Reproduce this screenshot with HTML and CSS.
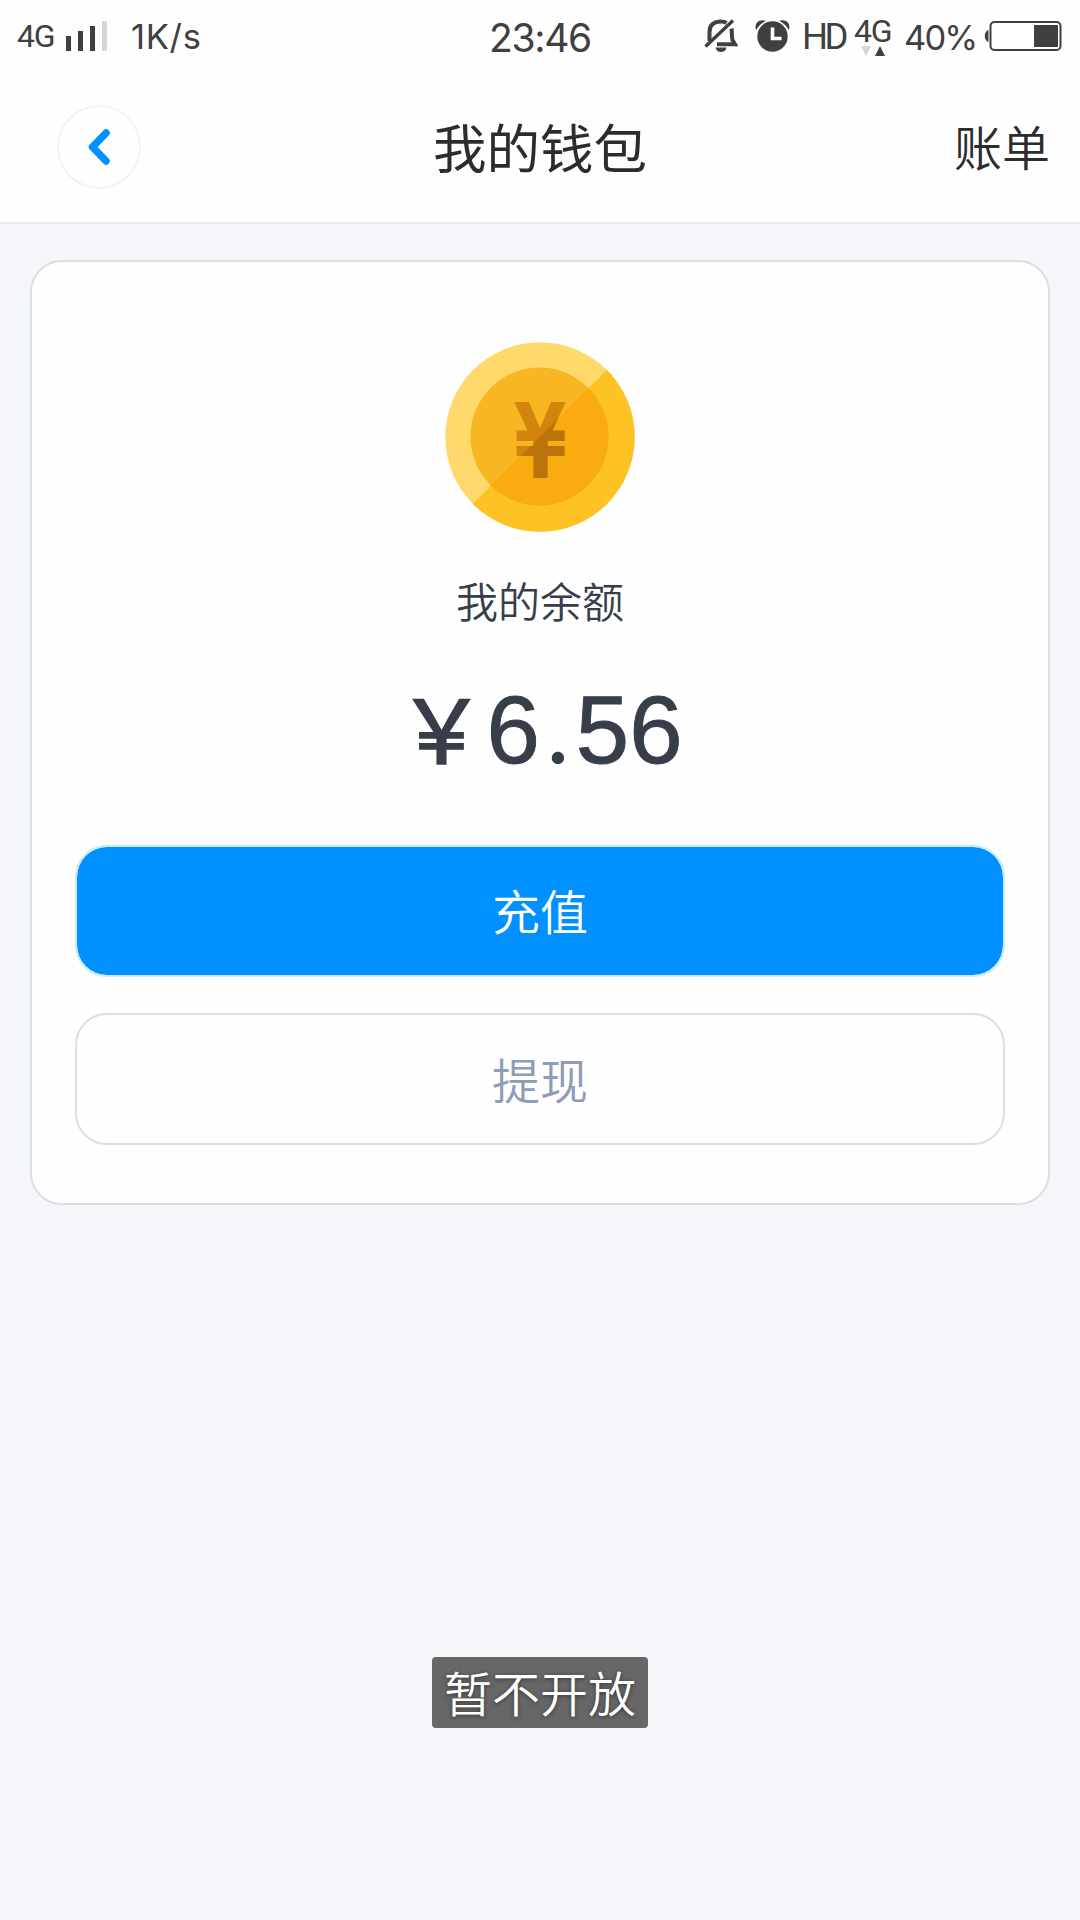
FILE: index.html
```html
<!DOCTYPE html>
<html lang="zh-CN">
<head>
<meta charset="utf-8">
<title>我的钱包</title>
<link rel="stylesheet" href="styles.css">
</head>
<body>
<div class="status">
  <div class="status-left">
    <span class="net">4G</span>
    <svg class="signal" width="42" height="30" viewBox="0 0 42 30"><path fill="#404040" d="M0 15h5v15H0zM12 10h5v20h-5zM24 5h5v25h-5z"/><path fill="#d6d6d6" d="M36 0h5v30h-5z"/></svg>
    <span class="speed">1K/s</span>
  </div>
  <time class="clock">23:46</time>
  <div class="status-right">
    <svg class="bell" width="34" height="34" viewBox="0 0 34 34"><path d="M5.500 23V14C5.500 7 10 3.500 17 3.500C19 3.500 21 4 22.500 5M27.500 10.500C28 13 27.500 18 28.500 22L31 26.300H13" fill="none" stroke="#404040" stroke-width="4"/><path d="M1.500 28.500L29 2.500" stroke="#404040" stroke-width="3.400"/><path d="M11.500 29.500h11c-1 6-10 6-11 0z" fill="#404040"/></svg>
    <svg class="alarm" width="36" height="34" viewBox="0 0 36 34"><g fill="#404040"><circle cx="17.500" cy="18.500" r="15.200"/><path d="M1 12C-1 5 4 .5 11 2.700Q4.500 6 1 12zM34 12C36 5 31 .5 24 2.700Q30.500 6 34 12z"/></g><path d="M17.500 9.500V20.500h9" fill="none" stroke="#fff" stroke-width="3.600"/></svg>
    <span class="hd">HD</span>
    <div class="mobile"><span>4G</span><svg width="24" height="10" viewBox="0 0 24 10"><path fill="#d6d6d6" d="M0 0h10L5 10z"/><path fill="#404040" d="M14 10h10L19 0z"/></svg></div>
    <span class="percent">40%</span>
    <svg class="battery" width="78" height="32" viewBox="0 0 78 32"><path d="M4.500 10C-.5 11-.5 21 4.500 22z" fill="#404040"/><rect x="6.500" y="2" width="70" height="28" rx="4" fill="#fff" stroke="#404040" stroke-width="2"/><path fill="#404040" d="M50 5h24v22H50z"/></svg>
  </div>
</div>
<header class="header">
  <button class="back" aria-label="返回"><svg width="24" height="38" viewBox="0 0 24 38"><path d="M19 5L5.500 19L19 33" fill="none" stroke="#0090ff" stroke-width="7.500" stroke-linecap="round" stroke-linejoin="round"/></svg></button>
  <h1>我的钱包</h1>
  <a class="bill">账单</a>
</header>
<main class="card">
  <svg class="coin" width="190" height="190" viewBox="0 0 190 190">
    <defs><clipPath id="lower"><path d="M190 -.5V190H-.5z"/></clipPath></defs>
    <circle cx="95" cy="95" r="94.700" fill="#ffd96b"/>
    <circle cx="95" cy="95" r="94.700" fill="#fdc224" clip-path="url(#lower)"/>
    <circle cx="94.500" cy="94.500" r="69" fill="#f8b622"/>
    <circle cx="94.500" cy="94.500" r="69" fill="#faab10" clip-path="url(#lower)"/>
    <path id="yen" fill="#d3840c" d="M69.500 60H84L95 86L106 60H120.500L107.500 88.500H119.500V99H102.500V104H119.500V114H102.500V136H88.500V114H71.500V104H88.500V99H71.500V88.500H82.500z"/>
    <use href="#yen" class="yen-shade" clip-path="url(#lower)"/>
  </svg>
  <p class="label">我的余额</p>
  <p class="amount"><span class="currency">￥</span><span>6</span><span class="dot">.</span><span>56</span></p>
  <button class="btn primary">充值</button>
  <button class="btn secondary">提现</button>
</main>
<div class="toast">暂不开放</div>
</body>
</html>
```
FILE: styles.css
```css
* { box-sizing: border-box; }
body {
  margin: 0;
  height: 1920px;
  position: relative;
  overflow: hidden;
  background: #f4f6fa;
  font-family: "Liberation Sans", "Noto Sans CJK SC", sans-serif;
  color: #2c2c2c;
}
button { font-family: inherit; padding: 0; margin: 0; }
h1, p { margin: 0; font-weight: 400; }
svg { display: block; flex: none; }

.status {
  height: 74px;
  background: #fefefe;
  display: grid;
  grid-template-columns: 1fr auto 1fr;
  color: #404040;
  line-height: 40px;
  white-space: nowrap;
  font-family: Inter, sans-serif;
}
.status-left, .status-right { display: flex; align-items: flex-start; }
.status-left { padding-left: 17px; }
.net { font-family: Roboto, sans-serif; font-size: 32px; letter-spacing: -1.2px; margin-top: 16px; width: 49px; }
.signal { margin-top: 21px; }
.speed { font-size: 34.5px; letter-spacing: 0.7px; margin: 17px 0 0 23px; }
.clock { font-size: 39px; letter-spacing: -1.3px; margin-top: 18px; }
.status-right { justify-content: flex-end; padding-right: 18px; }
.bell { margin: 18px 17px 0 0; }
.alarm { margin: 18px 11px 0 0; }
.hd { font-family: Roboto, sans-serif; font-size: 36.5px; letter-spacing: -3.5px; margin: 17px 0 0; width: 52px; }
.mobile { width: 50px; margin-top: 11px; }
.mobile span { font-family: Roboto, sans-serif; display: block; font-size: 32px; letter-spacing: -1.2px; height: 35px; }
.mobile svg { margin-left: 7px; }
.percent { font-size: 34.5px; letter-spacing: -1.9px; margin-top: 18px; width: 80px; }
.battery { margin-top: 20px; }

.header {
  height: 150px;
  background: #fefefe;
  border-bottom: 2px solid #e6e8ec;
  display: grid;
  grid-template-columns: 1fr auto 1fr;
}
.back {
  width: 84px;
  height: 84px;
  margin: 31px 0 0 57px;
  border: 2px solid #f0f3f7;
  border-radius: 50%;
  background: #fefefe;
  display: flex;
  align-items: center;
  justify-content: center;
}
.header h1 { font-size: 53.5px; line-height: 80px; margin-top: 37px; font-weight: 370; }
.bill { font-size: 48px; line-height: 72px; margin: 40px 30px 0 0; text-align: right; font-weight: 350; }

.card {
  width: 1020px;
  height: 945px;
  margin: 36px auto 0;
  padding: 80px 43px 0;
  border: 2px solid #d9dfe5;
  border-radius: 32px;
  background: #fefefe;
  display: flex;
  flex-direction: column;
  align-items: center;
}
.yen-shade { filter: brightness(0.88); }
.label { font-size: 42px; line-height: 60px; margin-top: 42px; color: #373e4a; font-weight: 350; }
.amount {
  display: flex;
  align-items: baseline;
  font-size: 96px;
  line-height: 110px;
  margin-top: 40px;
  height: 171px;
  color: #373e4a;
  -webkit-text-stroke: 1px #373e4a;
}
.currency { font-size: 88px; width: 89px; -webkit-text-stroke-width: 2px; }
.dot { font-family: Inter, sans-serif; font-size: 93px; width: 36px; text-align: center; -webkit-text-stroke-width: 0; }
.btn {
  width: 930px;
  height: 132px;
  border-radius: 32px;
  font-size: 48px;
  font-weight: 350;
  flex: none;
}
.primary { background: #0090ff; color: #fff; border: 2px solid #cdebff; background-clip: padding-box; padding-bottom: 4px; }
.secondary { background: #fefefe; color: #8f9bb8; border: 2px solid #d9dfe5; margin-top: 36px; padding-bottom: 3px; }

.toast {
  position: absolute;
  left: 432px;
  top: 1657px;
  width: 216px;
  height: 71px;
  border-radius: 4px;
  background: #676767;
  color: #fff;
  font-size: 48px;
  font-weight: 350;
  line-height: 78px;
  text-align: center;
  text-shadow: 0 1px 4px #333;
}
```
